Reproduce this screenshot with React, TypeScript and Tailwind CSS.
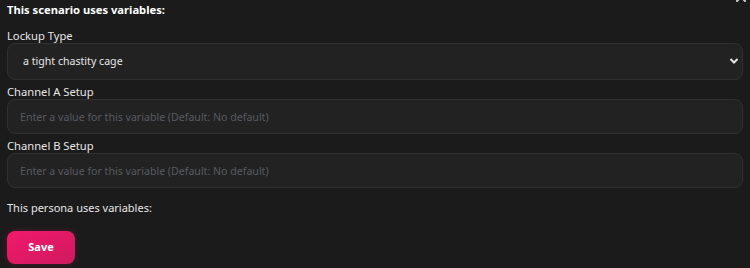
import React from 'react';

const fields = [
  { label: 'Channel A Setup' },
  { label: 'Channel B Setup' },
];

const App: React.FC = () => {
  return (
    <div className="relative h-[268px] w-[750px] overflow-hidden bg-[#1b1b1b] px-[7px] font-['Noto_Sans',sans-serif] text-[#e6e6e6]">
      <button className="absolute right-[3px] top-[-9px] text-[#d0d0d0]">
        <svg width="12" height="12" viewBox="0 0 12 12" fill="none" stroke="currentColor" strokeWidth="2" strokeLinecap="round">
          <path d="M2 2l8 8M10 2l-8 8" />
        </svg>
      </button>

      <h3 className="pt-[3px] text-[11.2px] font-bold leading-[14px] text-white">This scenario uses variables:</h3>

      <div className="mt-[12px] flex flex-col">
        <label className="text-[11.2px] leading-[14px]">Lockup Type</label>
        <div className="relative">
          <select
            className="h-[37px] w-full appearance-none rounded-lg border border-[#303030] bg-[#222222] pl-[15px] text-[10.6px] text-[#e6e6e6] outline-none"
            defaultValue="cage"
          >
            <option value="cage">a tight chastity cage</option>
          </select>
          <svg
            className="pointer-events-none absolute right-[4px] top-[14px] text-[#e6e6e6]"
            width="10"
            height="8"
            viewBox="0 0 10 8"
            fill="none"
            stroke="currentColor"
            strokeWidth="2"
          >
            <path d="M1.5 2l3.5 3.5L8.5 2" />
          </svg>
        </div>
      </div>

      {fields.map(f => (
        <div key={f.label} className="mt-[5px] flex flex-col">
          <label className="text-[11.2px] leading-[14px]">{f.label}</label>
          <input
            className="h-[35px] w-full rounded-lg border border-[#303030] bg-[#222222] px-[12px] text-[10.6px] text-[#e6e6e6] outline-none placeholder:text-[#585a61]"
            placeholder="Enter a value for this variable (Default: No default)"
          />
        </div>
      ))}

      <p className="mt-[13px] text-[11px] leading-[14px] text-[#e6e6e6]">This persona uses variables:</p>

      <button className="mt-[16px] h-[33px] w-[68px] rounded-lg bg-gradient-to-br from-[#f2196b] to-[#cf1a5f] text-[11px] font-bold text-white shadow-[0_0_6px_rgba(233,25,100,0.25)]">
        Save
      </button>
    </div>
  );
};

export default App;
